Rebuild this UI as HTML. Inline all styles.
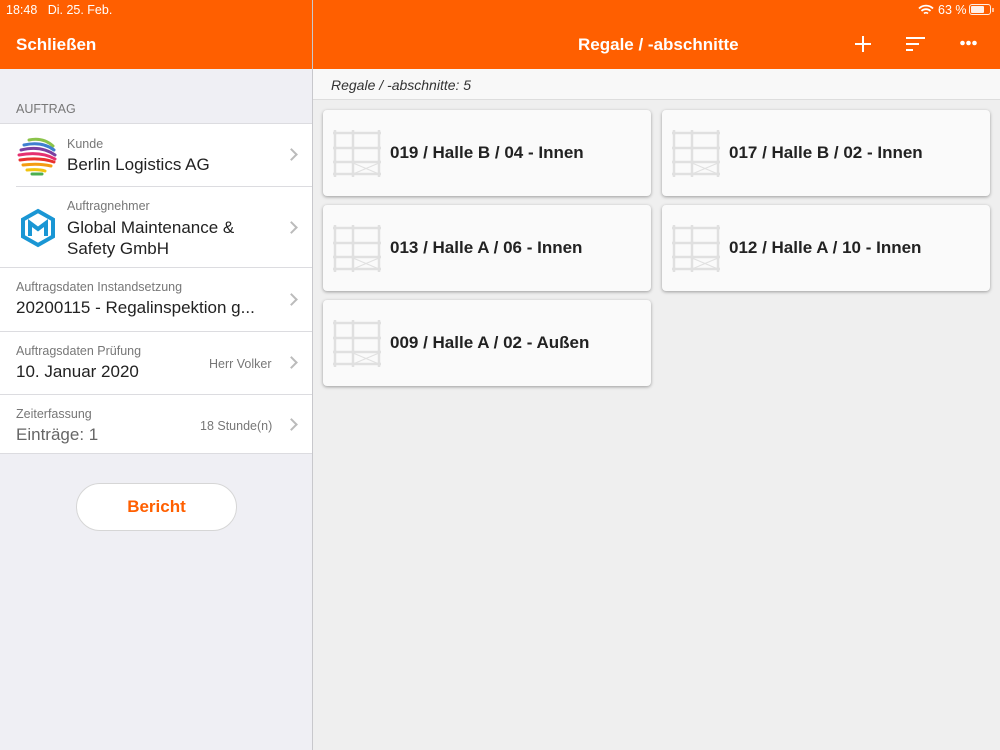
<!DOCTYPE html>
<html><head><meta charset="utf-8"><style>
*{margin:0;padding:0;box-sizing:border-box}
body{width:1000px;height:750px;overflow:hidden;font-family:"Liberation Sans",sans-serif;background:#efeff4;position:relative}
.hdr{position:absolute;top:0;left:0;width:1000px;height:69px;background:#ff5f00;color:#fff}
.abs{position:absolute}
.left{position:absolute;left:0;top:69px;width:312px;height:681px;background:#efeff4}
.div{position:absolute;left:312px;top:0;width:1px;height:750px;background:#c8c8cc}
.right{position:absolute;left:313px;top:69px;width:687px;height:681px;background:#efefef}
.row{position:absolute;left:0;width:312px;background:#fff}
.sep{position:absolute;left:16px;right:0;height:1px;background:#dcdce0}
.sm{font-size:12.5px;color:#777}
.big{font-size:17px;color:#222}
.chev{position:absolute;right:16px;width:9px;height:9px;border-right:2px solid #bbb;border-top:2px solid #bbb;transform:rotate(45deg)}
.card{position:absolute;width:328px;height:86px;background:#fafafa;border-radius:4px;box-shadow:0 1px 3px rgba(0,0,0,.35)}
.card .t{position:absolute;left:67px;top:33px;font-size:17px;font-weight:bold;color:#222}
.card svg{position:absolute;left:10px;top:20px}
</style></head><body>
<div class="hdr">
<div class="abs" style="left:6px;top:3px;font-size:12.5px">18:48 &nbsp; Di. 25. Feb.</div>
<div class="abs" style="left:16px;top:35px;font-size:17px;font-weight:bold">Schließen</div>
<div class="abs" style="left:578px;top:35px;font-size:17px;font-weight:bold">Regale / -abschnitte</div>
<svg class="abs" style="left:918px;top:4px" width="16" height="12" viewBox="0 0 16 12"><path d="M1 4.5a10 10 0 0 1 14 0M3.5 7a6.5 6.5 0 0 1 9 0M6 9.5a3 3 0 0 1 4 0" stroke="#fff" stroke-width="1.8" fill="none"/></svg>
<div class="abs" style="left:938px;top:3px;font-size:12.5px">63 %</div>
<div class="abs" style="left:969px;top:4px;width:22px;height:11px;border:1px solid #fff;border-radius:3px;opacity:.9"><div style="margin:1px;width:13px;height:7px;background:#fff;border-radius:1px"></div></div>
<div class="abs" style="left:992px;top:8px;width:2px;height:4px;background:#fff;opacity:.6"></div>
<svg class="abs" style="left:855px;top:36px" width="16" height="16"><path d="M8 0v16M0 8h16" stroke="#fff" stroke-width="2"/></svg>
<svg class="abs" style="left:906px;top:37px" width="20" height="14"><path d="M0 1h19M0 7h13M0 13h7" stroke="#fff" stroke-width="2"/></svg>
<svg class="abs" style="left:960px;top:40px" width="17" height="6"><circle cx="2.5" cy="3" r="2.3" fill="#fff"/><circle cx="8.5" cy="3" r="2.3" fill="#fff"/><circle cx="14.5" cy="3" r="2.3" fill="#fff"/></svg>
</div>
<div class="left">
<div class="abs sm" style="left:16px;top:32px;font-size:12.5px;top:33px">AUFTRAG</div>
<div class="row" style="top:54px;height:331px;border-top:1px solid #dcdce0;border-bottom:1px solid #dcdce0"></div>
<div class="sep" style="top:117px"></div><div class="sep" style="top:198px;left:0"></div><div class="sep" style="top:262px;left:0"></div><div class="sep" style="top:325px;left:0"></div>
<svg class="abs" style="left:17px;top:67px" width="40" height="40" viewBox="0 0 40 40" fill="none" stroke-width="3" stroke-linecap="round">
<path d="M12 4q14-3 24 6" stroke="#8bc34a"/><path d="M7 9q18-4 30 5" stroke="#3f7fd0"/><path d="M4 14q20-5 34 5" stroke="#7b3fa0"/><path d="M2 19q22-4 36 4" stroke="#e53070"/><path d="M3 24q20-3 34 2" stroke="#e8322f"/><path d="M6 29q16-2 28 1" stroke="#f39c12"/><path d="M10 34q12-1 18 1" stroke="#f1c40f"/><path d="M15 38q6 0 10 0" stroke="#4caf50"/></svg>
<div class="abs sm" style="left:67px;top:68px">Kunde</div>
<div class="abs big" style="left:67px;top:86px">Berlin Logistics AG</div>
<div class="chev" style="top:81px"></div>
<svg class="abs" style="left:20px;top:139px" width="36" height="40" viewBox="0 0 36 40" fill="none" stroke="#1a96d4" stroke-width="4"><path d="M18 3L33 11.5V28.5L18 37L3 28.5V11.5Z"/><path d="M10 28V15L18 21L26 15V28"/></svg>
<div class="abs sm" style="left:67px;top:130px">Auftragnehmer</div>
<div class="abs big" style="left:67px;top:148px;line-height:21px">Global Maintenance &amp;<br>Safety GmbH</div>
<div class="chev" style="top:154px"></div>
<div class="abs sm" style="left:16px;top:211px">Auftragsdaten Instandsetzung</div>
<div class="abs big" style="left:16px;top:229px">20200115 - Regalinspektion g...</div>
<div class="chev" style="top:226px"></div>
<div class="abs sm" style="left:16px;top:275px">Auftragsdaten Prüfung</div>
<div class="abs big" style="left:16px;top:293px">10. Januar 2020</div>
<div class="abs sm" style="left:209px;top:288px">Herr Volker</div>
<div class="chev" style="top:289px"></div>
<div class="abs sm" style="left:16px;top:338px">Zeiterfassung</div>
<div class="abs big" style="left:16px;top:356px;color:#666">Einträge: 1</div>
<div class="abs sm" style="left:200px;top:350px">18 Stunde(n)</div>
<div class="chev" style="top:351px"></div>
<div class="abs" style="left:76px;top:414px;width:161px;height:48px;background:#fff;border:1px solid #d6d6d6;border-radius:24px;text-align:center;line-height:46px;color:#ff5f00;font-size:17px;font-weight:bold">Bericht</div>
</div>
<div class="div"></div>
<div class="right">
<div class="abs" style="left:0;top:0;width:687px;height:31px;background:#f8f8f8;border-bottom:1px solid #ddd"></div>
<div class="abs" style="left:18px;top:8px;font-size:14px;font-style:italic;color:#333">Regale / -abschnitte: 5</div>
</div>
<svg width="0" height="0" style="position:absolute"><defs><g id="sh" stroke="#e0e0e0" stroke-width="2.5" fill="none"><path d="M2 0V47M20 0V47M46 0V47M0 3H48M0 18H48M0 32H48M0 44H48"/><path d="M20 33L46 44M20 44L46 33" stroke-width="1"/></g></defs></svg>
<div class="card" style="left:323px;top:110px"><svg width="48" height="47"><use href="#sh"/></svg><div class="t">019 / Halle B / 04 - Innen</div></div>
<div class="card" style="left:662px;top:110px"><svg width="48" height="47"><use href="#sh"/></svg><div class="t">017 / Halle B / 02 - Innen</div></div>
<div class="card" style="left:323px;top:205px"><svg width="48" height="47"><use href="#sh"/></svg><div class="t">013 / Halle A / 06 - Innen</div></div>
<div class="card" style="left:662px;top:205px"><svg width="48" height="47"><use href="#sh"/></svg><div class="t">012 / Halle A / 10 - Innen</div></div>
<div class="card" style="left:323px;top:300px"><svg width="48" height="47"><use href="#sh"/></svg><div class="t">009 / Halle A / 02 - Außen</div></div>
</body></html>
